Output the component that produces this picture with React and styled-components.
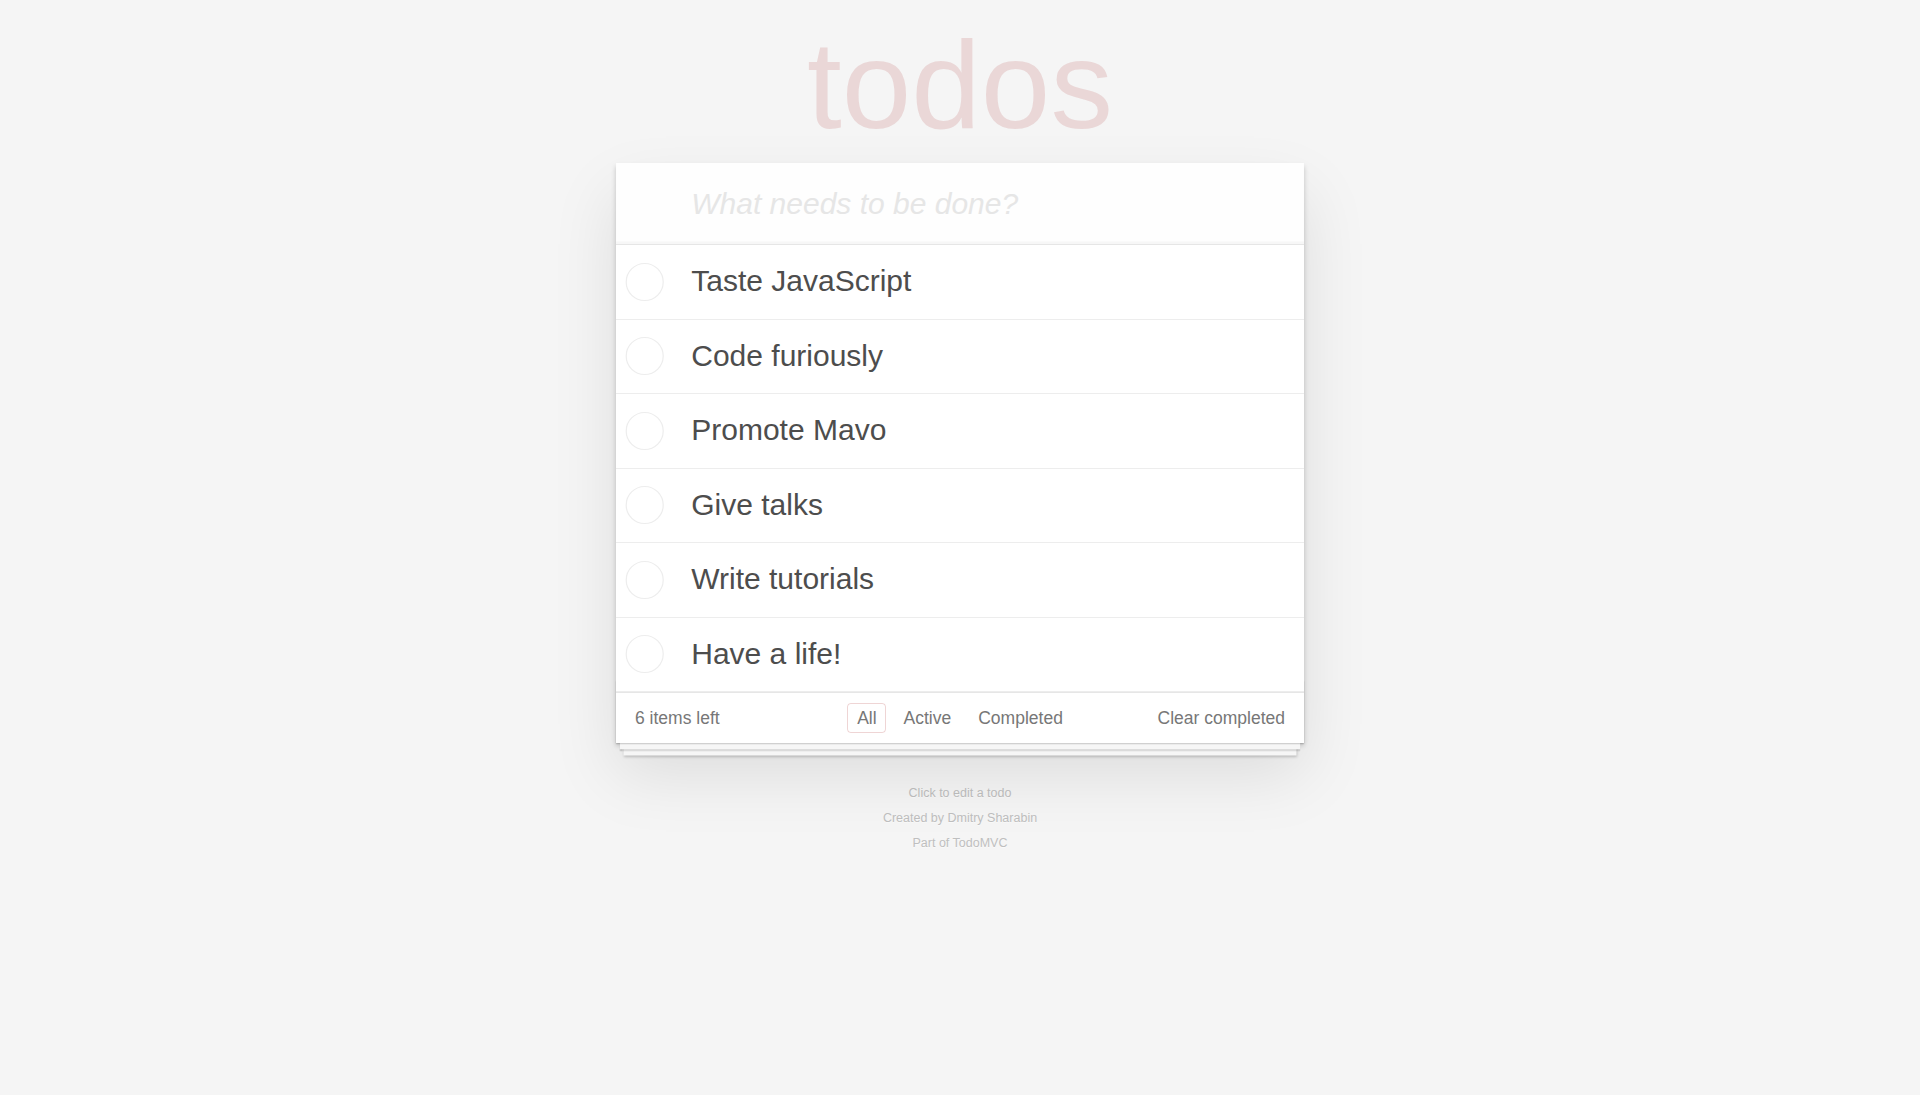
import React from "react";
import styled, { createGlobalStyle } from "styled-components";

const GlobalStyle = createGlobalStyle`
  html, body {
    margin: 0;
    padding: 0;
    background: #f5f5f5;
  }
  body {
    font-family: "Liberation Sans", Arial, Helvetica, sans-serif;
    font-size: 17.5px;
    line-height: 24.5px;
    color: #4d4d4d;
    font-weight: 300;
    -webkit-font-smoothing: antialiased;
  }
`;

const Page = styled.div`
  max-width: 687.5px;
  min-width: 287.5px;
  margin: 0 auto;
  padding-top: 22px;
  padding-bottom: 40px;
`;

const Title = styled.h1`
  margin: 0 0 15.5px;
  height: 125px;
  font-size: 125px;
  line-height: 125px;
  font-weight: 100;
  text-align: center;
  color: rgba(175, 47, 47, 0.15);
  text-rendering: optimizeLegibility;
`;

const Card = styled.section`
  position: relative;
  background: #fff;
  box-shadow: 0 2.5px 5px 0 rgba(0, 0, 0, 0.2), 0 31.25px 62.5px 0 rgba(0, 0, 0, 0.1);
`;

const NewTodo = styled.input`
  display: block;
  width: 100%;
  box-sizing: border-box;
  margin: 0;
  border: none;
  outline: none;
  padding: 20px 20px 19.5px 75px;
  font-family: inherit;
  font-size: 30px;
  line-height: 42px;
  font-weight: inherit;
  color: inherit;
  background: rgba(0, 0, 0, 0.003);
  box-shadow: inset 0 -2.5px 1.25px rgba(0, 0, 0, 0.03);

  &::placeholder {
    font-style: italic;
    font-weight: 300;
    color: #e6e6e6;
  }
`;

const List = styled.ul`
  margin: 0;
  padding: 0;
  list-style: none;
  border-top: 1px solid #e6e6e6;
`;

const Item = styled.li`
  display: flex;
  align-items: center;
  font-size: 30px;
  border-bottom: 1px solid #ededed;
`;

const Toggle = styled.svg`
  flex: none;
  width: 50px;
  height: 50px;
  display: block;
`;

const Label = styled.label`
  flex: 1;
  display: block;
  padding: 18.25px 18.75px 19.25px 25px;
  line-height: 1.2;
  word-break: break-all;
  color: #4d4d4d;
`;

const Footer = styled.footer`
  position: relative;
  display: grid;
  grid-template-columns: 1fr auto 1fr;
  align-items: center;
  height: 25px;
  padding: 12.5px 18.75px 12px;
  color: #777;
  border-top: 1px solid #e6e6e6;

  &::before {
    content: "";
    position: absolute;
    right: 0;
    bottom: 0;
    left: 0;
    height: 62.5px;
    overflow: hidden;
    box-shadow: 0 1.25px 1.25px rgba(0, 0, 0, 0.2),
      0 10px 0 -3.75px #f6f6f6,
      0 11.25px 1.25px -3.75px rgba(0, 0, 0, 0.2),
      0 20px 0 -7.5px #f6f6f6,
      0 21.25px 2.5px -7.5px rgba(0, 0, 0, 0.2);
  }
`;

const Count = styled.span`
  justify-self: start;
  position: relative;
`;

const Filters = styled.ul`
  margin: 0;
  padding: 0;
  list-style: none;
  position: relative;
`;

const FilterItem = styled.li`
  display: inline;
`;

const FilterLink = styled.a`
  color: inherit;
  margin: 3.75px;
  padding: 3.75px 8.75px;
  text-decoration: none;
  border: 1.25px solid ${(p) => (p.$selected ? "rgba(175, 47, 47, 0.2)" : "transparent")};
  border-radius: 3.75px;
  cursor: pointer;
`;

const Clear = styled.button`
  justify-self: end;
  position: relative;
  margin: 0;
  padding: 0;
  border: 0;
  background: none;
  font: inherit;
  color: inherit;
  line-height: 25px;
  cursor: pointer;
`;

const Info = styled.footer`
  display: flex;
  flex-direction: column;
  align-items: center;
  gap: 12.5px;
  margin-top: 44px;
  color: #bfbfbf;
  font-size: 12.5px;
  line-height: 1;
  text-shadow: 0 1px 0 rgba(255, 255, 255, 0.5);
`;

const InfoLine = styled.p`
  margin: 0;
`;

const InfoLink = styled.a`
  color: inherit;
  text-decoration: none;
`;

const todos = [
  "Taste JavaScript",
  "Code furiously",
  "Promote Mavo",
  "Give talks",
  "Write tutorials",
  "Have a life!",
];

const filters = ["All", "Active", "Completed"];

function Circle() {
  return (
    <Toggle viewBox="0 0 50 50" aria-hidden="true">
      <circle cx="28.7" cy="25" r="18.5" fill="none" stroke="#ededed" strokeWidth="1.2" />
    </Toggle>
  );
}

export default function App() {
  return (
    <>
      <GlobalStyle />
      <Page>
        <Title>todos</Title>
        <Card>
          <NewTodo placeholder="What needs to be done?" />
          <List>
            {todos.map((t) => (
              <Item key={t}>
                <Circle />
                <Label>{t}</Label>
              </Item>
            ))}
          </List>
          <Footer>
            <Count>6 items left</Count>
            <Filters>
              {filters.map((f) => (
                <FilterItem key={f}>
                  <FilterLink $selected={f === "All"}>{f}</FilterLink>
                </FilterItem>
              ))}
            </Filters>
            <Clear>Clear completed</Clear>
          </Footer>
        </Card>
        <Info>
          <InfoLine>Click to edit a todo</InfoLine>
          <InfoLine>
            Created by <InfoLink>Dmitry Sharabin</InfoLink>
          </InfoLine>
          <InfoLine>
            Part of <InfoLink>TodoMVC</InfoLink>
          </InfoLine>
        </Info>
      </Page>
    </>
  );
}
